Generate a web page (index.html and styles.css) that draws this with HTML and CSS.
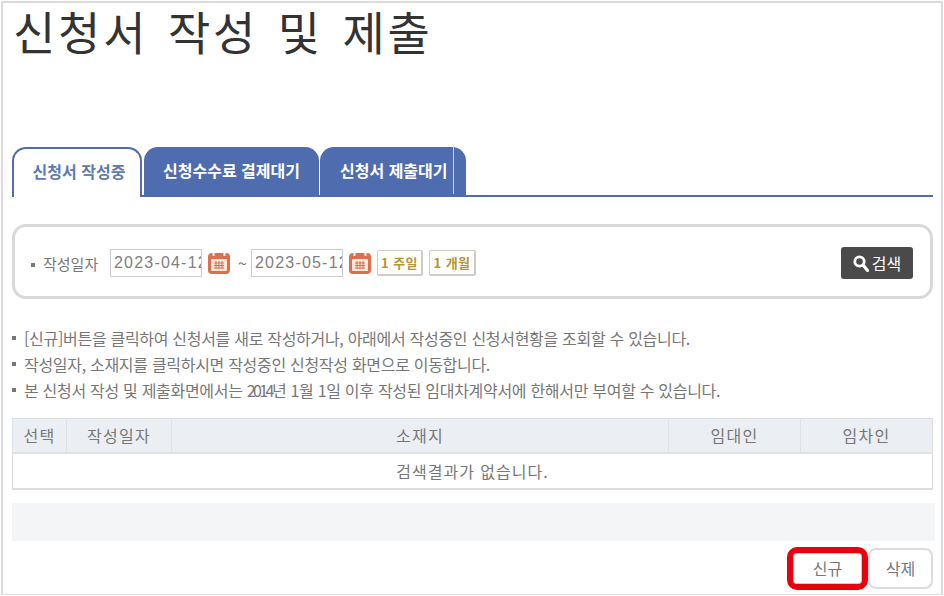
FILE: index.html
```html
<!DOCTYPE html>
<html lang="ko">
<head>
    <meta charset="UTF-8">
    <title>신청서 작성 및 제출</title>
    <link rel="stylesheet" href="styles.css">
</head>
<body>
    <div class="page">
        <h1 class="page-title">신청서 작성 및 제출</h1>

        <ul class="tabs">
            <li class="tab tab-active">신청서 작성중</li>
            <li class="tab tab-fee">신청수수료 결제대기</li>
            <li class="tab tab-submit"><span class="tab-label">신청서 제출대기</span></li>
        </ul>

        <div class="search-box">
            <span class="search-label">작성일자</span>
            <input class="date-input" type="text" value="2023-04-12">
            <svg class="cal-icon" viewBox="0 0 22 22" aria-hidden="true">
                <rect x="0" y="1" width="22" height="21" rx="4" fill="#dd6f4e"/>
                <rect x="3" y="7" width="16" height="12" rx="1" fill="#fbe7db"/>
                <path d="M5.500 0v4M16.500 0v4" stroke="#fff" stroke-width="2"/>
                <path d="M8 9v8M11 9v8M14 9v8M6 11h10M6 13.500h10M6 16h10" stroke="#dd6f4e" stroke-width="1" fill="none"/>
            </svg>
            <span class="tilde">~</span>
            <input class="date-input" type="text" value="2023-05-12">
            <svg class="cal-icon" viewBox="0 0 22 22" aria-hidden="true">
                <rect x="0" y="1" width="22" height="21" rx="4" fill="#dd6f4e"/>
                <rect x="3" y="7" width="16" height="12" rx="1" fill="#fbe7db"/>
                <path d="M5.500 0v4M16.500 0v4" stroke="#fff" stroke-width="2"/>
                <path d="M8 9v8M11 9v8M14 9v8M6 11h10M6 13.500h10M6 16h10" stroke="#dd6f4e" stroke-width="1" fill="none"/>
            </svg>
            <button class="period-btn period-week">1 주일</button>
            <button class="period-btn period-month">1 개월</button>
            <button class="search-btn">
                <svg class="search-icon" viewBox="0 0 16 17" aria-hidden="true">
                    <circle cx="6.500" cy="6.500" r="4.700" fill="none" stroke="#fff" stroke-width="2.800"/>
                    <path d="M10.500 10.500l4 5" stroke="#fff" stroke-width="3.200" stroke-linecap="round"/>
                </svg>검색
            </button>
        </div>

        <ul class="notes">
            <li>[신규]버튼을 클릭하여 신청서를 새로 작성하거나, 아래에서 작성중인 신청서현황을 조회할 수 있습니다.</li>
            <li>작성일자, 소재지를 클릭하시면 작성중인 신청작성 화면으로 이동합니다.</li>
            <li>본 신청서 작성 및 제출화면에서는 <span class="year">2014</span>년 1월 1일 이후 작성된 임대차계약서에 한해서만 부여할 수 있습니다.</li>
        </ul>

        <table class="result-table">
            <colgroup>
                <col class="col-check">
                <col class="col-date">
                <col>
                <col class="col-person">
                <col class="col-person">
            </colgroup>
            <thead>
                <tr>
                    <th>선택</th>
                    <th>작성일자</th>
                    <th>소재지</th>
                    <th>임대인</th>
                    <th>임차인</th>
                </tr>
            </thead>
            <tbody>
                <tr>
                    <td colspan="5">검색결과가 없습니다.</td>
                </tr>
            </tbody>
        </table>

        <div class="paging-bar"></div>

        <div class="actions">
            <button class="action-btn action-new">신규</button>
            <button class="action-btn action-delete">삭제</button>
        </div>
    </div>
</body>
</html>
```

FILE: styles.css
```css
:root {
    --tab-blue: #4f6cae;
    --line-gray: #d9d9d9;
    --text-gray: #777;
}

* {
    margin: 0;
    padding: 0;
    box-sizing: border-box;
}

html, body {
    width: 944px;
    height: 596px;
    overflow: hidden;
    background: #fff;
}

body {
    font-family: "Noto Sans CJK KR", "Liberation Sans", sans-serif;
    color: var(--text-gray);
    padding: 1px 1px 1px 1px;
}

.page {
    height: 594px;
    border: 2px solid #dcdcdc;
    border-bottom-width: 1px;
    padding: 0 8px 0 9px;
}

.page-title {
    font-family: "Liberation Sans", "Noto Sans CJK KR", sans-serif;
    font-size: 46px;
    font-weight: 400;
    line-height: 63px;
    letter-spacing: 2.8px;
    word-spacing: 4px;
    color: #333;
    padding-left: 1px;
    height: 144px;
}

/* tabs */
.tabs {
    display: flex;
    list-style: none;
    height: 50px;
    border-bottom: 2px solid var(--tab-blue);
}

.tab {
    height: 50px;
    display: flex;
    align-items: center;
    justify-content: center;
    font-size: 16px;
    font-weight: 700;
    padding-bottom: 4px;
    color: #fff;
    background: var(--tab-blue);
    border-radius: 14px 14px 0 0;
}

.tab-active {
    width: 130px;
    margin-right: 2px;
    padding-left: 4px;
    color: #5f7aaf;
    background: #fff;
    border: 2px solid var(--tab-blue);
    border-bottom: none;
}

.tab-fee {
    width: 175px;
    margin-right: 1px;
}

.tab-submit {
    width: 146px;
    justify-content: flex-start;
    padding-left: 20px;
}

.tab-label {
    border-right: 1px solid #c9d3e8;
    height: 48px;
    line-height: 48px;
    padding-right: 5px;
}

/* search box */
.search-box {
    display: flex;
    align-items: center;
    height: 75px;
    margin-top: 27px;
    padding: 3px 17px 0 16px;
    border: 3px solid var(--line-gray);
    border-radius: 14px;
}

.search-label {
    font-size: 15px;
    width: 79px;
    position: relative;
    padding-left: 12px;
}

.search-label::before {
    content: '';
    position: absolute;
    left: 0;
    top: 10px;
    width: 4px;
    height: 4px;
    background: #777;
}

.date-input {
    width: 92px;
    height: 28px;
    border: 1px solid #ccc;
    padding-left: 3px;
    font-family: "Liberation Sans", sans-serif;
    font-size: 16px;
    letter-spacing: 1.2px;
    color: #808080;
    background: #fff;
}

.cal-icon {
    width: 22px;
    height: 22px;
    margin-left: 6px;
    flex-shrink: 0;
}

.tilde {
    width: 21px;
    padding-left: 4px;
    text-align: center;
    font-size: 16px;
}

.period-btn {
    height: 26px;
    margin-left: 6px;
    font-family: inherit;
    font-size: 13px;
    font-weight: 700;
    letter-spacing: 0.4px;
    color: #b3963c;
    background: #fffef8;
    border: 1px solid #ccc;
    border-right-width: 2px;
    border-bottom-width: 2px;
    border-radius: 2px;
}

.period-week {
    width: 46px;
}

.period-month {
    width: 47px;
}

.search-btn {
    display: flex;
    align-items: center;
    justify-content: center;
    gap: 3px;
    width: 72px;
    height: 32px;
    margin-left: auto;
    font-family: inherit;
    font-size: 16px;
    color: #fff;
    background: #4a4a4a;
    border: none;
    border-radius: 3px;
}

.search-icon {
    width: 16px;
    height: 17px;
}

/* guide text */
.notes {
    list-style: none;
    margin-top: 26px;
    font-size: 16px;
    letter-spacing: -0.3px;
    line-height: 26px;
}

.notes li {
    position: relative;
    padding-left: 12px;
}

.notes li::before {
    content: '';
    position: absolute;
    left: 0;
    top: 11px;
    width: 4px;
    height: 4px;
    background: #777;
}

.year {
    letter-spacing: -2.6px;
}

/* result table */
.result-table {
    width: 100%;
    margin-top: 15px;
    border-collapse: collapse;
    table-layout: fixed;
    font-size: 16px;
    border: 1px solid #ddd;
    border-bottom-width: 2px;
}

.col-check {
    width: 54px;
}

.col-date {
    width: 105px;
}

.col-person {
    width: 132px;
}

.result-table th {
    height: 34px;
    font-weight: 400;
    letter-spacing: 1.3px;
    background: #ebeff3;
    border-left: 1px solid #dde2e7;
    border-bottom: 2px solid #dde2e7;
}

.result-table td {
    height: 36px;
    letter-spacing: 1px;
    text-align: center;
}

.paging-bar {
    height: 38px;
    margin-top: 13px;
    margin-right: -2px;
    background: #f4f5f7;
}

/* bottom buttons */
.actions {
    display: flex;
    justify-content: flex-end;
    align-items: center;
    margin-top: 6px;
}

.action-btn {
    width: 65px;
    height: 41px;
    font-family: inherit;
    font-size: 16px;
    color: #777;
    background: #fff;
    border: 2px solid #ddd;
    border-radius: 8px;
}

.action-new {
    width: 81px;
    height: 43px;
    border: 6px solid #e8000f;
    border-radius: 10px;
    box-shadow: inset 0 0 0 1px #ccc;
}
```
